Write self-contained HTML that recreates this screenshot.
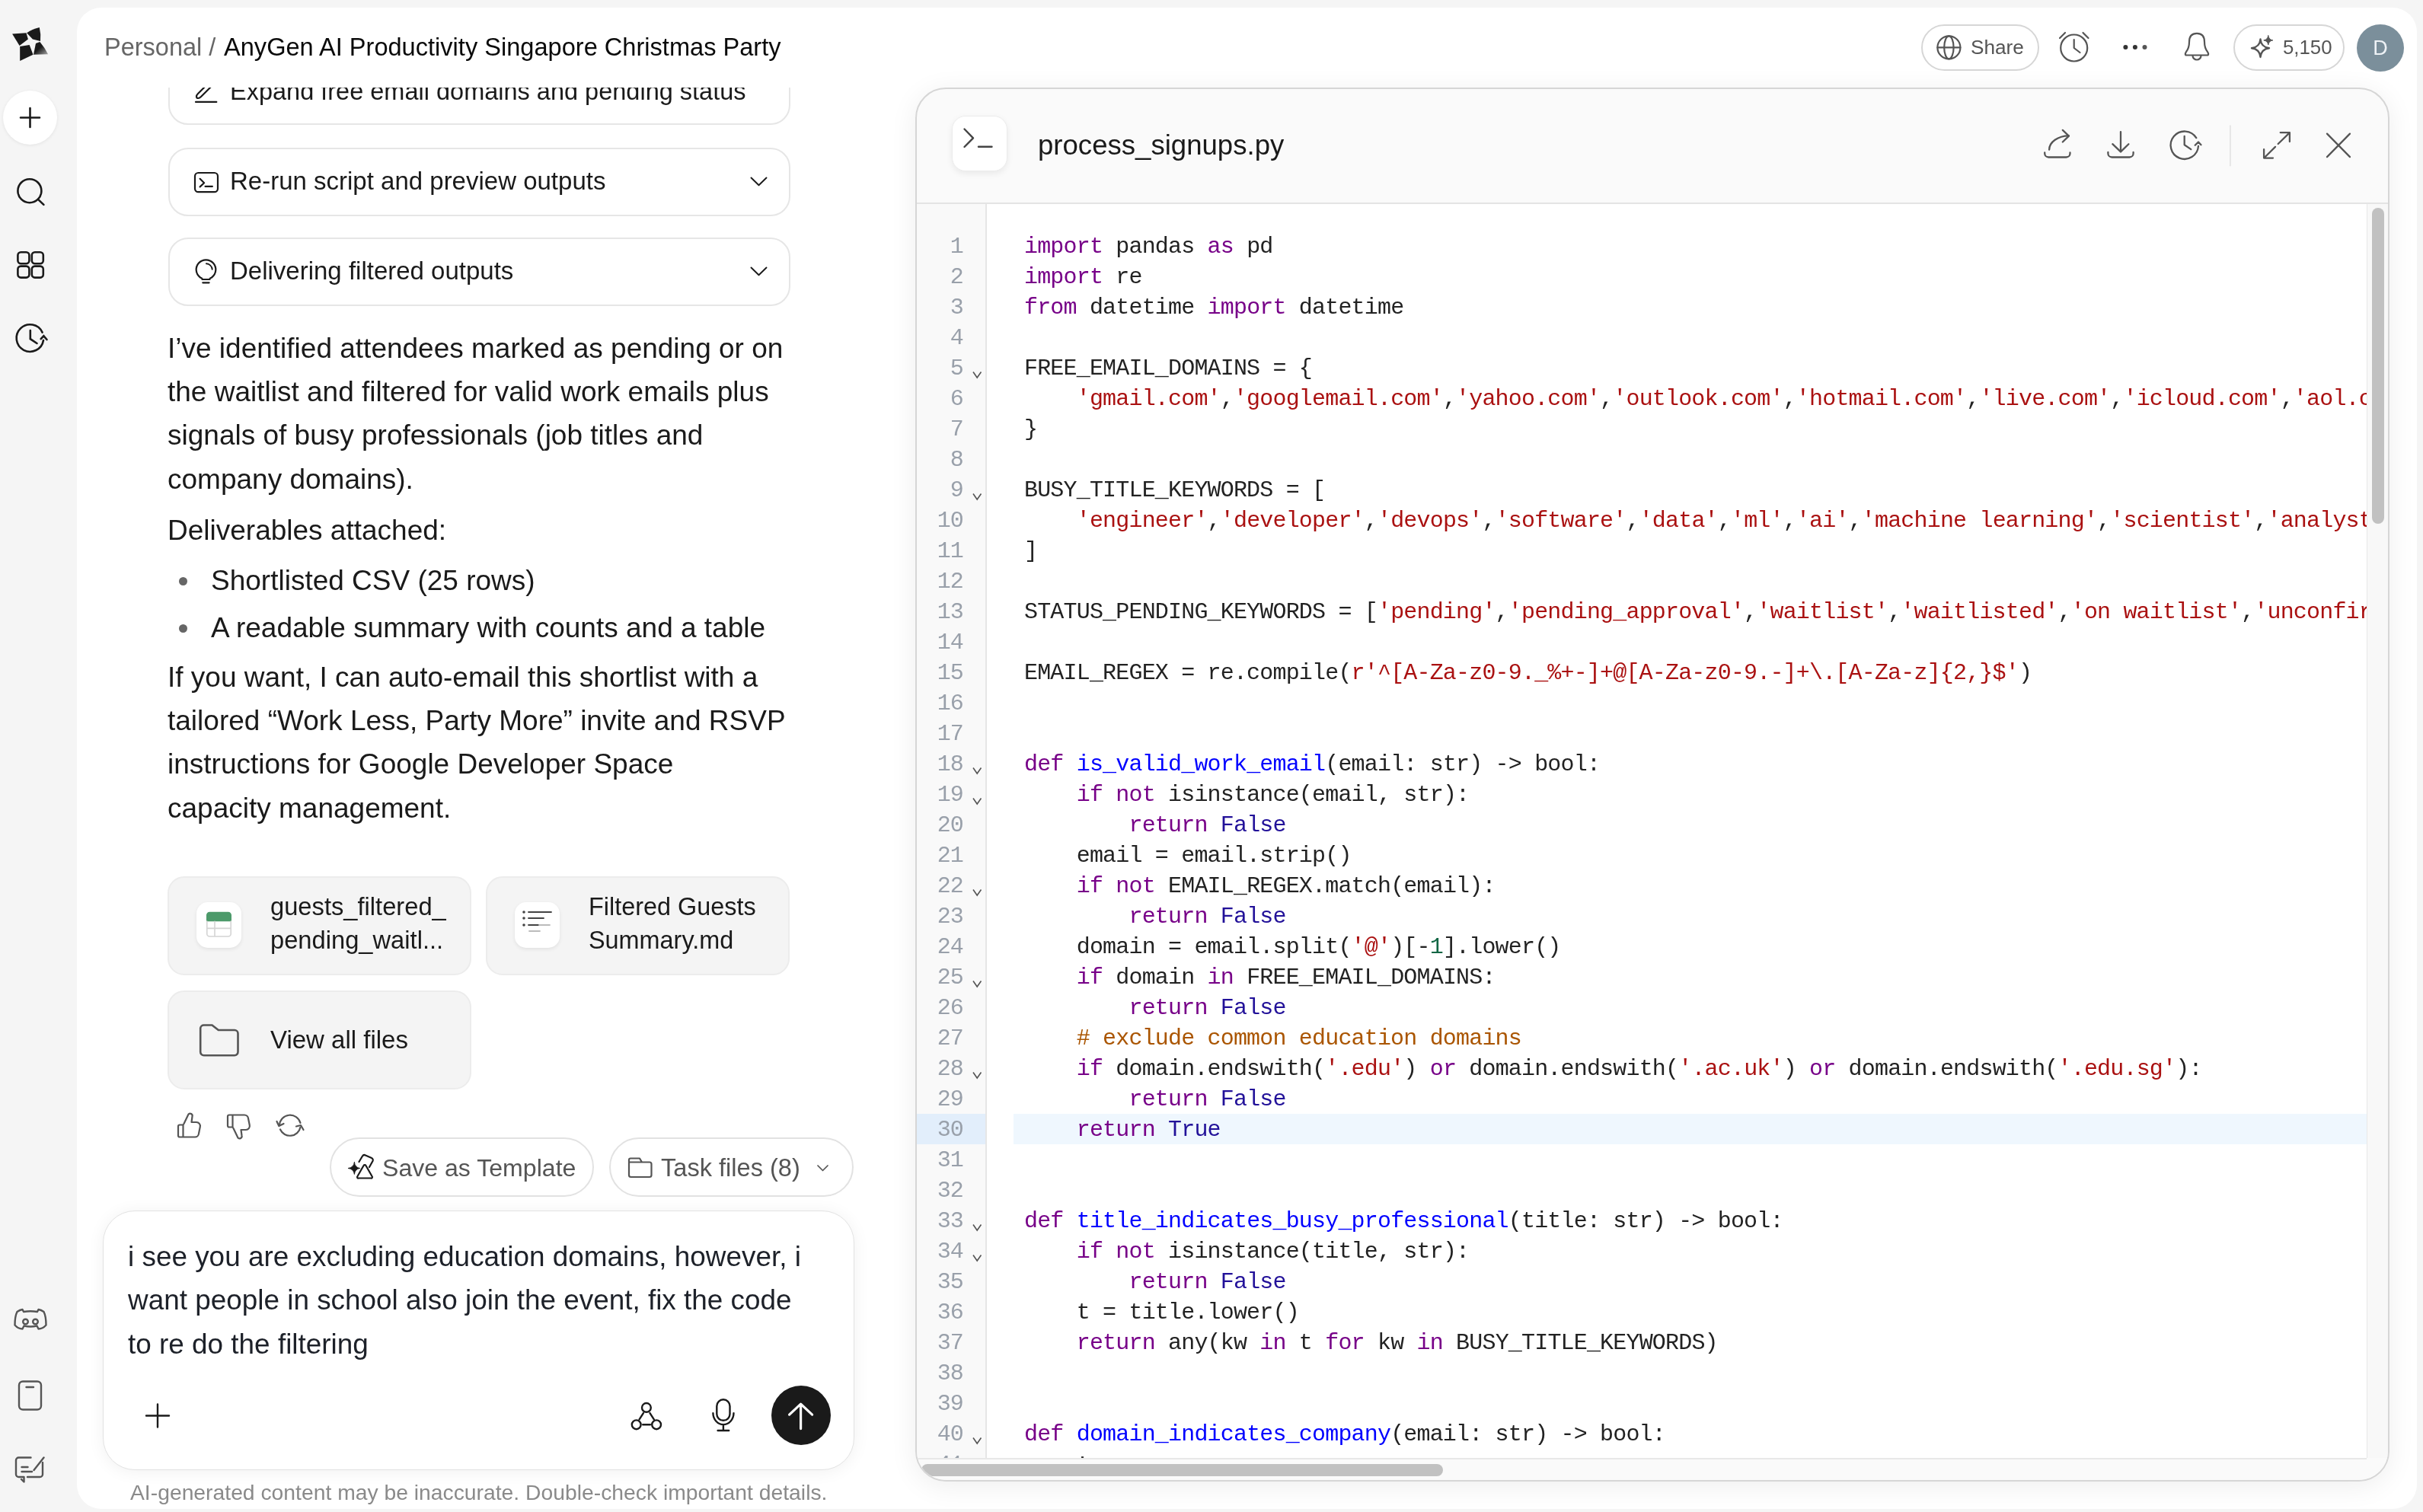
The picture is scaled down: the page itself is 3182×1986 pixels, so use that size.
<!DOCTYPE html>
<html><head><meta charset="utf-8">
<style>
*{box-sizing:border-box;margin:0;padding:0}
html,body{width:3182px;height:1986px;overflow:hidden;background:#f5f5f5;font-family:"Liberation Sans",sans-serif;color:#1a1a1a}
.abs{position:absolute}
.t,.para,.cl,.ln{will-change:transform}
svg{position:absolute;overflow:visible}
#main{position:absolute;left:101px;top:10px;width:3073px;height:1972px;background:#fff;border-radius:32px}
.t{position:absolute;white-space:pre}
.card{position:absolute;left:221px;width:817px;height:90px;border:2px solid #e6e6e6;border-radius:26px;background:#fff}
.para{position:absolute;left:220px;font-size:37px;line-height:57.2px;white-space:pre;color:#1a1a1a}
.fcard{position:absolute;width:399px;height:130px;background:#f4f4f4;border:2px solid #ececec;border-radius:22px}
.pill{position:absolute;border:2px solid #e3e3e3;border-radius:40px;background:#fff}
#code{position:absolute;left:1202px;top:115px;width:1936px;height:1831px;border:2px solid #d6d6d6;border-radius:40px;background:#fafafa;overflow:hidden;box-shadow:0 6px 36px rgba(0,0,0,0.07)}
.ln{position:absolute;left:0;width:61px;text-align:right;font-family:"Liberation Mono",monospace;font-size:30px;letter-spacing:-0.82px;line-height:40px;color:#99a0aa}
.cl{position:absolute;left:141px;font-family:"Liberation Mono",monospace;font-size:30px;letter-spacing:-0.82px;line-height:40px;white-space:pre;color:#222}
.k{color:#708}.d{color:#00f}.s{color:#a11}.a{color:#219}.n{color:#164}.c{color:#a50}
</style></head><body>

<!-- SIDEBAR -->
<svg style="left:0;top:0" width="101" height="500">
  <defs><linearGradient id="lg" x1="0" y1="0" x2="1" y2="1"><stop offset="0" stop-color="#1a1a1a"/><stop offset="0.45" stop-color="#1a1a1a"/><stop offset="1" stop-color="#aaa"/></linearGradient></defs>
  <path d="M16.1 44.4 L34.5 43.2 L36.9 51.5 L25.6 59.9 Z" fill="#1a1a1a"/>
  <path d="M35.1 43.2 Q43 38 51.8 36.1 Q54 45 53 53.9 L42.9 51.5 Z" fill="#1a1a1a"/>
  <path d="M47 56.9 L52.4 55.1 Q59 63 63.1 71.2 L44 71.8 Z" fill="url(#lg)"/>
  <path d="M26.2 61.1 L38.7 59 L43.5 71.8 L26.2 80.1 Z" fill="#1a1a1a"/>
</svg>
<div class="abs" style="left:4px;top:119px;width:71px;height:71px;border-radius:50%;background:#fff;box-shadow:0 1px 4px rgba(0,0,0,0.08)"></div>
<svg style="left:0;top:0" width="101" height="500" fill="none" stroke="#1a1a1a" stroke-width="2.6" stroke-linecap="round">
  <path d="M27 154.5 H52 M39.5 142 V167"/>
  <circle cx="38.9" cy="250.7" r="15.5"/><path d="M50 261.9 L57.4 268.9"/>
  <rect x="23.4" y="331.3" width="15" height="15" rx="4"/><rect x="41.8" y="331.3" width="15" height="15" rx="4"/>
  <rect x="23.4" y="349.6" width="15" height="15" rx="4"/><rect x="41.8" y="349.6" width="15" height="15" rx="4"/>
  <path d="M55.6 436.6 A17.8 17.8 0 1 0 57 447"/><path d="M53.7 445.2 L57.4 441.3 L61.5 446"/>
  <path d="M39.8 434 V445.2 L48.5 451"/>
</svg>

<!-- MAIN PANEL -->
<div id="main"></div>

<!-- header breadcrumb -->
<div class="t" style="left:137px;top:42px;font-size:32.5px;line-height:40px;color:#666">Personal /</div>
<div class="t" style="left:294px;top:42px;font-size:32.6px;line-height:40px;color:#0a0a0a">AnyGen AI Productivity Singapore Christmas Party</div>



<!-- CHAT COLUMN -->
<div class="abs" style="left:150px;top:115px;width:1000px;height:1375px;overflow:hidden">
  <div class="card" style="left:71px;top:-41px"></div>
  <div class="card" style="left:71px;top:79px"></div>
  <div class="card" style="left:71px;top:197px"></div>
</div>
<div class="t" style="left:302px;top:100px;font-size:32.5px;line-height:40px;clip-path:inset(15px 0 0 0)">Expand free email domains and pending status</div>
<div class="t" style="left:302px;top:218px;font-size:33px;line-height:40px">Re-run script and preview outputs</div>
<div class="t" style="left:302px;top:336px;font-size:33px;line-height:40px">Delivering filtered outputs</div>
<svg style="left:0;top:0" width="1100" height="420" fill="none" stroke="#1a1a1a" stroke-width="2.2" stroke-linecap="round" stroke-linejoin="round">
  <path d="M986.5 233.5 L996.5 243.3 L1006.5 233.5" stroke-width="1.9"/>
  <path d="M986.5 351.5 L996.5 361.3 L1006.5 351.5" stroke-width="1.9"/>
  <rect x="256" y="227" width="30" height="25.2" rx="4.5"/><path d="M262.6 234.8 L268.1 240.2 L262.6 245.4 M269.5 244.8 H278.9"/>
  <path d="M265.5 367 V366 Q265.5 365.5 263 364.5 A12.8 12.8 0 1 1 278 364.5 Q275.5 365.5 275.5 366 V367 Z"/><path d="M266.3 371.3 H274.6"/><path d="M271 346.3 A8.5 8.5 0 0 1 278.7 353.7" stroke-width="2"/>
  <clipPath id="clp"><rect x="0" y="115" width="1100" height="300"/></clipPath>
  <g clip-path="url(#clp)"><path d="M258.5 128.5 Q257 126 260 123 L276 107 M258.5 128.5 Q261 130 264 127 L280 111"/><path d="M257 133.9 H284.3"/></g>
</svg>
<div class="para" style="top:428.5px">I’ve identified attendees marked as pending or on
the waitlist and filtered for valid work emails plus
signals of busy professionals (job titles and
company domains).</div>
<div class="para" style="top:667.5px">Deliverables attached:</div>
<div class="abs" style="left:235px;top:758px;width:11px;height:11px;border-radius:50%;background:#666"></div>
<div class="abs" style="left:235px;top:820px;width:11px;height:11px;border-radius:50%;background:#666"></div>
<div class="para" style="left:277px;top:733.5px">Shortlisted CSV (25 rows)</div>
<div class="para" style="left:277px;top:795.5px">A readable summary with counts and a table</div>
<div class="para" style="top:860.5px">If you want, I can auto-email this shortlist with a
tailored “Work Less, Party More” invite and RSVP
instructions for Google Developer Space
capacity management.</div>

<!-- file cards -->
<div class="fcard" style="left:220px;top:1151px"></div>
<div class="fcard" style="left:638px;top:1151px"></div>
<div class="fcard" style="left:220px;top:1301px"></div>
<div class="abs" style="left:258px;top:1185px;width:59px;height:60px;border-radius:15px;background:#fff;box-shadow:0 2px 5px rgba(0,0,0,0.08)"></div>
<div class="abs" style="left:676px;top:1185px;width:59px;height:60px;border-radius:15px;background:#fff;box-shadow:0 2px 5px rgba(0,0,0,0.08)"></div>
<svg style="left:0;top:0" width="1200" height="1600" fill="none" stroke-linecap="round" stroke-linejoin="round">
  <path d="M271 1210.3 V1202 A4.3 4.3 0 0 1 275.3 1197.7 H299.7 A4.3 4.3 0 0 1 304 1202 V1210.3 Z" fill="#4c9a6a" stroke="none"/>
  <path d="M271.8 1210 V1226.5 A3.5 3.5 0 0 0 275.3 1230 H299.7 A3.5 3.5 0 0 0 303.2 1226.5 V1210 M271.8 1219.4 H303.2 M282 1210.3 V1230" stroke="#d4d4d4" stroke-width="1.6"/>
  <circle cx="688" cy="1198" r="1.8" fill="#444"/><circle cx="688" cy="1206" r="1.8" fill="#444"/><circle cx="688" cy="1215" r="1.8" fill="#444"/>
  <path d="M694 1198 H724 M694 1206 H714 M694 1215 H708" stroke="#444" stroke-width="1.8"/>
  <path d="M708 1215 H722 M695 1223 H709" stroke="#bbb" stroke-width="1.8"/>
  <path d="M263.2 1350.5 A4.5 4.5 0 0 1 267.7 1346.5 H278.5 L286.8 1353 H308 A4.5 4.5 0 0 1 312.5 1357.5 V1381.5 A4.5 4.5 0 0 1 308 1386.2 H267.7 A4.5 4.5 0 0 1 263.2 1381.5 Z" stroke="#555" stroke-width="2.6"/>
</svg>
<div class="t" style="left:355px;top:1169px;font-size:32.7px;line-height:44px;color:#1a1a1a">guests_filtered_
pending_waitl...</div>
<div class="t" style="left:773px;top:1169px;font-size:32.4px;line-height:44px;color:#1a1a1a">Filtered Guests
Summary.md</div>
<div class="t" style="left:355px;top:1346px;font-size:33px;line-height:40px;color:#1a1a1a">View all files</div>


<!-- action icons -->
<svg style="left:0;top:0" width="1200" height="1986" fill="none" stroke="#555" stroke-width="2.2" stroke-linecap="round" stroke-linejoin="round">
  <path d="M240.5 1477.5 H236 A2 2 0 0 0 234 1479.5 V1491.5 A2 2 0 0 0 236 1493.5 H256 A5 5 0 0 0 261 1489 L262.8 1480 A5 5 0 0 0 258 1474 H251.5 L252.5 1466.5 A3 3 0 0 0 247.5 1463.5 L241.5 1476 Z M240.5 1477.5 V1493.5"/>
  <path d="M305.5 1480.5 H301 A2 2 0 0 1 299 1478.5 V1466.5 A2 2 0 0 1 301 1464.5 H321 A5 5 0 0 1 326 1469 L327.8 1478 A5 5 0 0 1 323 1484 H316.5 L317.5 1491.5 A3 3 0 0 1 312.5 1494.5 L306.5 1482 Z M305.5 1480.5 V1464.5"/>
  <path d="M367 1478 A14 14 0 0 1 394.5 1475"/><path d="M363.5 1473 L366.3 1479 L372.5 1476"/>
  <path d="M368 1483.5 A14 14 0 0 0 394.5 1480.5"/><path d="M389 1479.5 L395 1478 L398.5 1484"/>
</svg>
<!-- pills -->
<div class="pill" style="left:433px;top:1494px;width:347px;height:78px;border-color:#e2e2e2"></div>
<div class="pill" style="left:800px;top:1494px;width:321px;height:78px;border-color:#e2e2e2"></div>
<div class="t" style="left:502px;top:1514px;font-size:32.1px;line-height:40px;color:#555">Save as Template</div>
<div class="t" style="left:868px;top:1514px;font-size:32.6px;line-height:40px;color:#555">Task files (8)</div>
<svg style="left:0;top:0" width="1200" height="1986" fill="none" stroke-linecap="round" stroke-linejoin="round">
  <path d="M465.4 1526.5 Q466.2 1533.6 472.8 1534.5 Q466.2 1535.4 465.4 1542.5 Q464.6 1535.4 457 1534.5 Q464.6 1533.6 465.4 1526.5 Z" fill="#1a1a1a" stroke="#1a1a1a" stroke-width="0.8"/>
  <path d="M471.5 1526 L476 1518.5 A3 3 0 0 1 480 1517.5 L488 1521 A3 3 0 0 1 489.5 1525 L485 1533" stroke="#1a1a1a" stroke-width="2.2"/>
  <path d="M477.5 1531 L469.5 1545 A1.5 1.5 0 0 0 471 1547.5 H487 A1.5 1.5 0 0 0 488.5 1545 L480.5 1531 A1.7 1.7 0 0 0 477.5 1531 Z" stroke="#1a1a1a" stroke-width="2.2"/>
  <path d="M826 1528 V1523.5 A2 2 0 0 1 828 1521.5 H840 L843 1526.5 H853 A2.5 2.5 0 0 1 855.5 1529 V1543.5 A2.5 2.5 0 0 1 853 1546 H828.5 A2.5 2.5 0 0 1 826 1543.5 Z M826 1526.5 H843" stroke="#555" stroke-width="2.2"/>
  <path d="M1074 1531 L1080.5 1537.5 L1087 1531" stroke="#555" stroke-width="1.7"/>
</svg>

<!-- input fade -->
<!-- input box -->
<div class="abs" style="left:135px;top:1590px;width:987px;height:341px;border:1.5px solid #e2e2e2;border-radius:42px;background:#fff;box-shadow:0 2px 22px rgba(0,0,0,0.06)"></div>
<div class="t" style="left:168px;top:1622px;font-size:36.9px;line-height:57.4px;color:#1d2129">i see you are excluding education domains, however, i
want people in school also join the event, fix the code
to re do the filtering</div>
<svg style="left:0;top:0" width="1200" height="1986" fill="none" stroke="#1a1a1a" stroke-width="2.4" stroke-linecap="round" stroke-linejoin="round">
  <path d="M192 1859.5 H222 M207 1844.5 V1874.5"/>
  <circle cx="848.9" cy="1848.9" r="5.9"/><circle cx="835.7" cy="1871.3" r="5.9"/><circle cx="862.1" cy="1871.3" r="5.9"/>
  <path d="M844.9 1856.1 L839.6 1864.4 M853.5 1856.1 L858.8 1864.4 M844.2 1871.3 H853.9"/>
  <rect x="941.3" y="1838.3" width="17.2" height="27.5" rx="8.6"/>
  <path d="M936.4 1856.1 A13.5 15 0 0 0 963.5 1856.1 M949.9 1871.3 V1879 M942.6 1879 H957.2"/>
</svg>
<div class="abs" style="left:1012.5px;top:1820.3px;width:78.2px;height:78.2px;border-radius:50%;background:#1a1a1a"></div>
<svg style="left:0;top:0" width="1200" height="1986" fill="none" stroke="#fff" stroke-width="3.2" stroke-linecap="round" stroke-linejoin="round">
  <path d="M1051.6 1845 V1876.6 M1036.6 1858.1 L1051.6 1844.2 L1066.6 1858.1"/>
</svg>
<div class="t" style="left:171px;top:1941px;font-size:28.3px;line-height:38px;color:#8a8a8a">AI-generated content may be inaccurate. Double-check important details.</div>

<!-- bottom sidebar icons -->
<svg style="left:0;top:0" width="101" height="1986" fill="none" stroke="#555" stroke-width="2.4" stroke-linecap="round" stroke-linejoin="round">
  <path d="M29.5 1720 Q26 1720.5 22.5 1723 Q19.5 1729 19.5 1740.5 Q24 1745.5 29.5 1745.5 L31.5 1741.5 Q40 1743.5 48.5 1741.5 L50.5 1745.5 Q56 1745.5 60.5 1740.5 Q60.5 1729 57.5 1723 Q54 1720.5 50.5 1720 L49 1723 Q40 1721.5 31 1723 Z"/>
  <circle cx="33.5" cy="1736" r="3.3"/><circle cx="46.5" cy="1736" r="3.3"/>
  <rect x="25" y="1814.5" width="29" height="37" rx="5"/><path d="M34.5 1822 H44"/>
  <path d="M28 1943 L31.5 1946.5 V1940 H24.5 A3.5 3.5 0 0 1 21 1936.5 V1918 A3.5 3.5 0 0 1 24.5 1914.5 H40.5 M56 1921 V1936.5 A3.5 3.5 0 0 1 52.5 1940 H36"/>
  <path d="M28.5 1927 H36.5 M28.5 1933 H42 M44.5 1931 L57.5 1914.5"/>
</svg>

<!-- TOP RIGHT -->
<div class="pill" style="left:2523px;top:32px;width:155px;height:61px;border-color:#d6d6d6"></div>
<div class="t" style="left:2588px;top:43px;font-size:26.2px;line-height:38px;color:#555">Share</div>
<div class="pill" style="left:2933px;top:32px;width:146px;height:61px;border-color:#d6d6d6"></div>
<div class="t" style="left:2998px;top:43px;font-size:25.8px;line-height:38px;color:#555">5,150</div>
<div class="abs" style="left:3095px;top:32px;width:62px;height:62px;border-radius:50%;background:#7b8f9b"></div>
<div class="t" style="left:3095px;top:44px;width:62px;text-align:center;font-size:27px;line-height:38px;color:#eef2f6">D</div>
<svg style="left:0;top:0" width="3182" height="240" fill="none" stroke="#555" stroke-width="2.2" stroke-linecap="round" stroke-linejoin="round">
  <circle cx="2559.4" cy="62.4" r="15"/><ellipse cx="2559.4" cy="62.4" rx="6.2" ry="15"/><path d="M2544.4 62.4 H2574.4"/>
  <circle cx="2723.7" cy="63" r="17.5"/><path d="M2723.7 52 V63 L2731.5 69"/><path d="M2705 50 L2712 43 M2742.5 50 L2735.5 43"/>
  <path d="M2870.5 72.5 Q2869 71 2871 68 Q2875 63 2875 55 Q2875 43.8 2885 43.8 Q2895 43.8 2895 55 Q2895 63 2899 68 Q2901 71 2899.5 72.5 Z"/><path d="M2879.5 73 A5.5 5.5 0 0 0 2890.5 73"/>
  <path d="M2968.5 51.5 Q2969.5 62 2980 63.2 Q2969.5 64.5 2968.5 75 Q2967.5 64.5 2957 63.2 Q2967.5 62 2968.5 51.5 Z" stroke-width="2.4"/>
  <path d="M2978.8 46.8 Q2979.5 52.2 2984.8 52.9 Q2979.5 53.6 2978.8 59 Q2978 53.6 2972.8 52.9 Q2978 52.2 2978.8 46.8 Z" fill="#555" stroke-width="1"/>
</svg>
<svg style="left:0;top:0" width="3182" height="240">
  <circle cx="2791.4" cy="62" r="3" fill="#333"/><circle cx="2803.9" cy="62" r="3" fill="#333"/><circle cx="2816.5" cy="62" r="3" fill="#555"/>
</svg>
<div id="code">
<div class="abs" style="left:0;top:149px;width:1932px;height:2px;background:#e4e4e4"></div>
<div class="abs" style="left:0;top:151px;width:92px;height:1649px;background:#f9f9f9;border-right:2px solid #e6e6e6"></div>
<div class="abs" style="left:92px;top:151px;width:1814px;height:1649px;background:#fff"></div>
<div class="abs" style="left:0;top:1346px;width:90px;height:40px;background:#e2eefb"></div>
<div class="abs" style="left:127px;top:1346px;width:1779px;height:40px;background:#eff7fe"></div>
<div class="abs" style="left:0;top:151px;width:1906px;height:1649px;overflow:hidden">
<div class="ln" style="top:36px">1</div>
<div class="cl" style="top:36px"><span class=k>import</span> pandas <span class=k>as</span> pd</div>
<div class="ln" style="top:76px">2</div>
<div class="cl" style="top:76px"><span class=k>import</span> re</div>
<div class="ln" style="top:116px">3</div>
<div class="cl" style="top:116px"><span class=k>from</span> datetime <span class=k>import</span> datetime</div>
<div class="ln" style="top:156px">4</div>
<div class="cl" style="top:156px"></div>
<div class="ln" style="top:196px">5</div>
<svg style="left:73px;top:219px" width="13" height="11" fill="none" stroke="#555" stroke-width="1.6"><path d="M1 1.5 L6.2 9 L11.5 1.5"/></svg>
<div class="cl" style="top:196px">FREE_EMAIL_DOMAINS = {</div>
<div class="ln" style="top:236px">6</div>
<div class="cl" style="top:236px">    <span class=s>'gmail.com'</span>,<span class=s>'googlemail.com'</span>,<span class=s>'yahoo.com'</span>,<span class=s>'outlook.com'</span>,<span class=s>'hotmail.com'</span>,<span class=s>'live.com'</span>,<span class=s>'icloud.com'</span>,<span class=s>'aol.com'</span>,<span class=s>'proton.me'</span>,</div>
<div class="ln" style="top:276px">7</div>
<div class="cl" style="top:276px">}</div>
<div class="ln" style="top:316px">8</div>
<div class="cl" style="top:316px"></div>
<div class="ln" style="top:356px">9</div>
<svg style="left:73px;top:379px" width="13" height="11" fill="none" stroke="#555" stroke-width="1.6"><path d="M1 1.5 L6.2 9 L11.5 1.5"/></svg>
<div class="cl" style="top:356px">BUSY_TITLE_KEYWORDS = [</div>
<div class="ln" style="top:396px">10</div>
<div class="cl" style="top:396px">    <span class=s>'engineer'</span>,<span class=s>'developer'</span>,<span class=s>'devops'</span>,<span class=s>'software'</span>,<span class=s>'data'</span>,<span class=s>'ml'</span>,<span class=s>'ai'</span>,<span class=s>'machine learning'</span>,<span class=s>'scientist'</span>,<span class=s>'analyst'</span>,<span class=s>'manager'</span>,</div>
<div class="ln" style="top:436px">11</div>
<div class="cl" style="top:436px">]</div>
<div class="ln" style="top:476px">12</div>
<div class="cl" style="top:476px"></div>
<div class="ln" style="top:516px">13</div>
<div class="cl" style="top:516px">STATUS_PENDING_KEYWORDS = [<span class=s>'pending'</span>,<span class=s>'pending_approval'</span>,<span class=s>'waitlist'</span>,<span class=s>'waitlisted'</span>,<span class=s>'on waitlist'</span>,<span class=s>'unconfirmed'</span>]</div>
<div class="ln" style="top:556px">14</div>
<div class="cl" style="top:556px"></div>
<div class="ln" style="top:596px">15</div>
<div class="cl" style="top:596px">EMAIL_REGEX = re.compile(<span class=s>r'^[A-Za-z0-9._%+-]+@[A-Za-z0-9.-]+\.[A-Za-z]{2,}$'</span>)</div>
<div class="ln" style="top:636px">16</div>
<div class="cl" style="top:636px"></div>
<div class="ln" style="top:676px">17</div>
<div class="cl" style="top:676px"></div>
<div class="ln" style="top:716px">18</div>
<svg style="left:73px;top:739px" width="13" height="11" fill="none" stroke="#555" stroke-width="1.6"><path d="M1 1.5 L6.2 9 L11.5 1.5"/></svg>
<div class="cl" style="top:716px"><span class=k>def</span> <span class=d>is_valid_work_email</span>(email: str) -&gt; bool:</div>
<div class="ln" style="top:756px">19</div>
<svg style="left:73px;top:779px" width="13" height="11" fill="none" stroke="#555" stroke-width="1.6"><path d="M1 1.5 L6.2 9 L11.5 1.5"/></svg>
<div class="cl" style="top:756px">    <span class=k>if</span> <span class=k>not</span> isinstance(email, str):</div>
<div class="ln" style="top:796px">20</div>
<div class="cl" style="top:796px">        <span class=k>return</span> <span class=a>False</span></div>
<div class="ln" style="top:836px">21</div>
<div class="cl" style="top:836px">    email = email.strip()</div>
<div class="ln" style="top:876px">22</div>
<svg style="left:73px;top:899px" width="13" height="11" fill="none" stroke="#555" stroke-width="1.6"><path d="M1 1.5 L6.2 9 L11.5 1.5"/></svg>
<div class="cl" style="top:876px">    <span class=k>if</span> <span class=k>not</span> EMAIL_REGEX.match(email):</div>
<div class="ln" style="top:916px">23</div>
<div class="cl" style="top:916px">        <span class=k>return</span> <span class=a>False</span></div>
<div class="ln" style="top:956px">24</div>
<div class="cl" style="top:956px">    domain = email.split(<span class=s>'@'</span>)[-<span class=n>1</span>].lower()</div>
<div class="ln" style="top:996px">25</div>
<svg style="left:73px;top:1019px" width="13" height="11" fill="none" stroke="#555" stroke-width="1.6"><path d="M1 1.5 L6.2 9 L11.5 1.5"/></svg>
<div class="cl" style="top:996px">    <span class=k>if</span> domain <span class=k>in</span> FREE_EMAIL_DOMAINS:</div>
<div class="ln" style="top:1036px">26</div>
<div class="cl" style="top:1036px">        <span class=k>return</span> <span class=a>False</span></div>
<div class="ln" style="top:1076px">27</div>
<div class="cl" style="top:1076px">    <span class=c># exclude common education domains</span></div>
<div class="ln" style="top:1116px">28</div>
<svg style="left:73px;top:1139px" width="13" height="11" fill="none" stroke="#555" stroke-width="1.6"><path d="M1 1.5 L6.2 9 L11.5 1.5"/></svg>
<div class="cl" style="top:1116px">    <span class=k>if</span> domain.endswith(<span class=s>'.edu'</span>) <span class=k>or</span> domain.endswith(<span class=s>'.ac.uk'</span>) <span class=k>or</span> domain.endswith(<span class=s>'.edu.sg'</span>):</div>
<div class="ln" style="top:1156px">29</div>
<div class="cl" style="top:1156px">        <span class=k>return</span> <span class=a>False</span></div>
<div class="ln" style="top:1196px">30</div>
<div class="cl" style="top:1196px">    <span class=k>return</span> <span class=a>True</span></div>
<div class="ln" style="top:1236px">31</div>
<div class="cl" style="top:1236px"></div>
<div class="ln" style="top:1276px">32</div>
<div class="cl" style="top:1276px"></div>
<div class="ln" style="top:1316px">33</div>
<svg style="left:73px;top:1339px" width="13" height="11" fill="none" stroke="#555" stroke-width="1.6"><path d="M1 1.5 L6.2 9 L11.5 1.5"/></svg>
<div class="cl" style="top:1316px"><span class=k>def</span> <span class=d>title_indicates_busy_professional</span>(title: str) -&gt; bool:</div>
<div class="ln" style="top:1356px">34</div>
<svg style="left:73px;top:1379px" width="13" height="11" fill="none" stroke="#555" stroke-width="1.6"><path d="M1 1.5 L6.2 9 L11.5 1.5"/></svg>
<div class="cl" style="top:1356px">    <span class=k>if</span> <span class=k>not</span> isinstance(title, str):</div>
<div class="ln" style="top:1396px">35</div>
<div class="cl" style="top:1396px">        <span class=k>return</span> <span class=a>False</span></div>
<div class="ln" style="top:1436px">36</div>
<div class="cl" style="top:1436px">    t = title.lower()</div>
<div class="ln" style="top:1476px">37</div>
<div class="cl" style="top:1476px">    <span class=k>return</span> any(kw <span class=k>in</span> t <span class=k>for</span> kw <span class=k>in</span> BUSY_TITLE_KEYWORDS)</div>
<div class="ln" style="top:1516px">38</div>
<div class="cl" style="top:1516px"></div>
<div class="ln" style="top:1556px">39</div>
<div class="cl" style="top:1556px"></div>
<div class="ln" style="top:1596px">40</div>
<svg style="left:73px;top:1619px" width="13" height="11" fill="none" stroke="#555" stroke-width="1.6"><path d="M1 1.5 L6.2 9 L11.5 1.5"/></svg>
<div class="cl" style="top:1596px"><span class=k>def</span> <span class=d>domain_indicates_company</span>(email: str) -&gt; bool:</div>
<div class="ln" style="top:1636px">41</div>
<div class="abs" style="left:216px;top:1645px;width:3px;height:4px;background:#333"></div>
</div>
<div class="abs" style="left:1904px;top:151px;width:30px;height:1649px;background:#f8f8f8;border-left:1px solid #e8e8e8"></div>
<div class="abs" style="left:1911px;top:156px;width:16px;height:415px;border-radius:8px;background:#c1c1c1"></div>
<div class="abs" style="left:0;top:1798px;width:1932px;height:31px;background:#fafafa"></div><div class="abs" style="left:0;top:1798px;width:1904px;height:2px;background:#e8e8e8"></div>
<div class="abs" style="left:6px;top:1806px;width:685px;height:16px;border-radius:8px;background:#c1c1c1"></div>
<div class="abs" style="left:46px;top:35px;width:73px;height:73px;border-radius:18px;background:#fff;border:1.5px solid #ececec;box-shadow:0 3px 8px rgba(0,0,0,0.07)"></div>
<div class="t" style="left:159px;top:52px;font-size:36.6px;line-height:44px;color:#1a1a1a">process_signups.py</div>
</div>
<svg style="left:0;top:0" width="3182" height="240" fill="none" stroke="#555" stroke-width="2.3" stroke-linecap="round" stroke-linejoin="round">
  <path d="M1266.5 169.5 L1278 181.3 L1266.5 193" stroke="#444" stroke-width="2.4"/><path d="M1285 192.7 H1302.5" stroke="#444" stroke-width="2.4"/>
  <path d="M2685.2 200.4 V201.5 A5 5 0 0 0 2690.2 206.5 H2713.5 A5 5 0 0 0 2718.5 201.5 V200.4"/>
  <path d="M2691.1 196.7 A25.8 18.3 0 0 1 2716.9 178.4"/><path d="M2708.8 170.9 L2716.9 178.6 L2708.8 186.5"/>
  <path d="M2768.4 199.9 V201.5 A5 5 0 0 0 2773.4 206.5 H2796.6 A5 5 0 0 0 2801.6 201.5 V199.9"/>
  <path d="M2785 173.1 V199.2"/><path d="M2774.3 189.2 L2785 199.4 L2795.4 189.2"/>
  <path d="M2884.3 181.1 A18.2 18.2 0 1 0 2887 191.8"/><path d="M2882.7 190.8 L2887 186.5 L2890.5 190.2"/><path d="M2868.7 179 V190.2 L2877.3 196.1"/>
  <path d="M2928.9 165.2 V217.6" stroke="#e6e6e6" stroke-width="2"/>
  <path d="M2994.7 174.1 H3006.9 V186 M3006.2 174.9 L2991.7 189 M2973.1 196.1 V207.6 H2985 M2973.5 207.2 L2988 192.9"/>
  <path d="M3056 175.6 L3086 206.1 M3086 175.6 L3056 206.1"/>
</svg>
</body></html>
